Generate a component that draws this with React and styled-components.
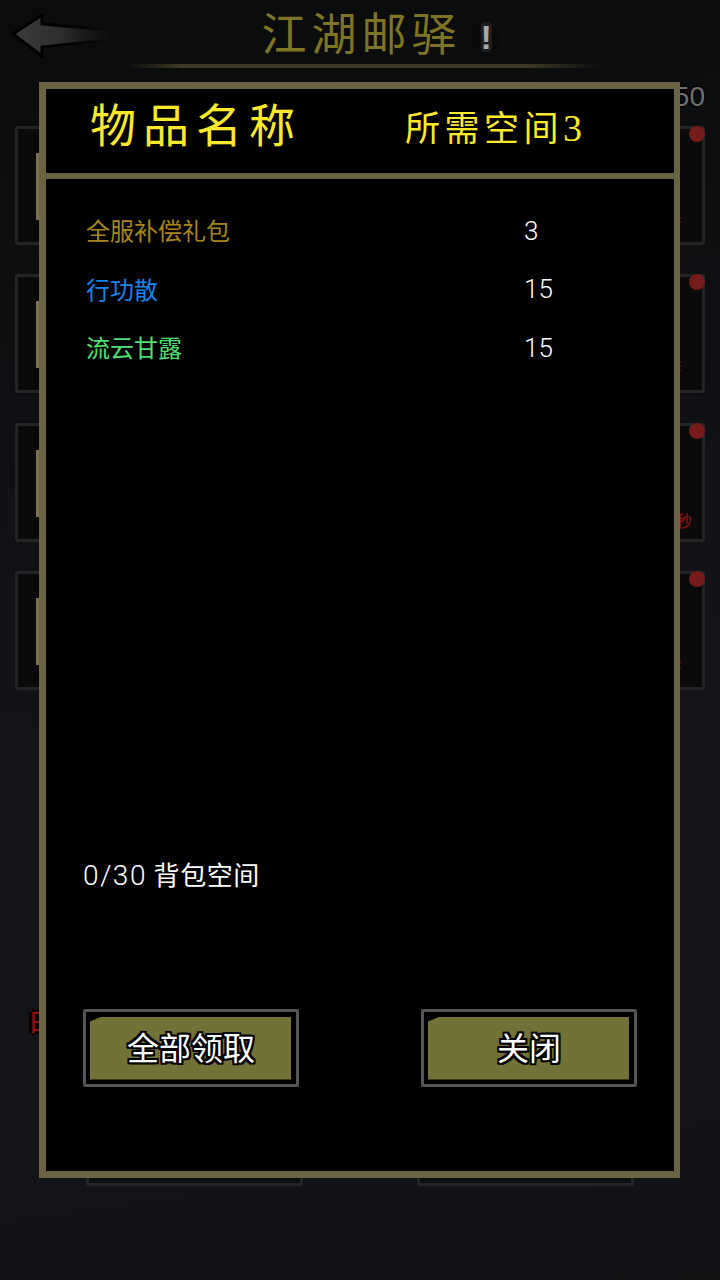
import React from "react";
import styled, { createGlobalStyle } from "styled-components";

const CJK = `"Noto Sans CJK SC", "Noto Sans", sans-serif`;
const TITLE = `"Liberation Serif", "Noto Sans CJK SC", serif`;

const GlobalStyle = createGlobalStyle`
  html, body {
    margin: 0;
    padding: 0;
    background: #111214;
  }
  * {
    box-sizing: border-box;
  }
`;

const mails = [
  { id: 1, tail: "6天" },
  { id: 2, tail: "6天" },
  { id: 3, tail: "秒", urgent: true },
  { id: 4, tail: "6天" },
];

const items = [
  { name: "全服补偿礼包", size: 3, color: "#a6861c" },
  { name: "行功散", size: 15, color: "#1685f0" },
  { name: "流云甘露", size: 15, color: "#4fe070" },
];

function BackArrow() {
  return (
    <svg width="112" height="48" viewBox="0 0 112 48">
      <defs>
        <linearGradient id="arrowFill" x1="0" x2="1" y1="0" y2="0">
          <stop offset="0" stopColor="#3c3c3c" />
          <stop offset="0.45" stopColor="#2e2e2e" />
          <stop offset="1" stopColor="#181818" stopOpacity="0" />
        </linearGradient>
        <linearGradient id="arrowEdge" x1="0" x2="1" y1="0" y2="0">
          <stop offset="0" stopColor="#000" />
          <stop offset="0.5" stopColor="#000" />
          <stop offset="1" stopColor="#000" stopOpacity="0" />
        </linearGradient>
      </defs>
      <path
        d="M3 22 L32 3 V12 L107 19 V27 L32 35 V44 Z"
        fill="url(#arrowFill)"
        stroke="url(#arrowEdge)"
        strokeWidth="3"
        strokeLinejoin="miter"
      />
    </svg>
  );
}

function App() {
  return (
    <Screen>
      <GlobalStyle />
      <Header>
        <BackButton>
          <BackArrow />
        </BackButton>
        <PageTitle>江湖邮驿</PageTitle>
        <Notice>
          <NoticeMark>!</NoticeMark>
        </Notice>
        <HeaderRule />
      </Header>
      <Counter>50</Counter>
      <MailList>
        {mails.map((mail) => (
          <MailCard key={mail.id}>
            <MailHandle />
            <MailTail $urgent={mail.urgent}>{mail.tail}</MailTail>
            <UnreadDot />
          </MailCard>
        ))}
      </MailList>
      <HintText>由</HintText>
      <FooterRow>
        <FooterButton />
        <FooterButton />
      </FooterRow>

      <Modal>
        <ModalHeader>
          <NameHeading>物品名称</NameHeading>
          <SpaceHeading>
            所需空间<SpaceNumber>3</SpaceNumber>
          </SpaceHeading>
        </ModalHeader>
        <ModalBody>
          <ItemList>
            {items.map((item) => (
              <ItemRow key={item.name}>
                <ItemName $color={item.color}>{item.name}</ItemName>
                <ItemSize>{item.size}</ItemSize>
              </ItemRow>
            ))}
          </ItemList>
          <BagSpace>
            <BagCount>0/30</BagCount> 背包空间
          </BagSpace>
          <ButtonRow>
            <ActionButton>
              <ButtonFace>全部领取</ButtonFace>
            </ActionButton>
            <ActionButton>
              <ButtonFace>关闭</ButtonFace>
            </ActionButton>
          </ButtonRow>
        </ModalBody>
      </Modal>
    </Screen>
  );
}

export default App;

const Screen = styled.div`
  position: relative;
  width: 720px;
  height: 1280px;
  overflow: hidden;
  background: linear-gradient(172deg, #0a0b0c 0%, #0e0f11 25%, #131519 65%, #111214 100%);
  font-family: ${CJK};
`;

const Header = styled.div`
  position: relative;
  height: 82px;
  display: flex;
  justify-content: center;
  padding-top: 6px;
`;

const BackButton = styled.div`
  position: absolute;
  left: 10px;
  top: 12px;
  line-height: 0;
`;

const PageTitle = styled.div`
  font-family: ${TITLE};
  font-size: 45px;
  line-height: 60px;
  letter-spacing: 5px;
  color: #7d7524;
  margin-left: 3px;
`;

const Notice = styled.div`
  position: absolute;
  left: 472px;
  top: 22px;
  width: 28px;
  height: 30px;
  border-radius: 14px;
  background: #090a0a;
  display: flex;
  justify-content: center;
`;

const NoticeMark = styled.div`
  width: 11px;
  height: 30px;
  border-radius: 4px;
  background: #1c1d1e;
  color: #a8a8a8;
  font: bold 34px/30px "Liberation Sans", sans-serif;
  text-align: center;
`;

const HeaderRule = styled.div`
  position: absolute;
  left: 125px;
  top: 64px;
  width: 475px;
  height: 4px;
  background: linear-gradient(90deg, transparent, #3d3924 12%, #3d3924 85%, transparent);
`;

const Counter = styled.div`
  height: 44px;
  padding-right: 15px;
  text-align: right;
  color: #6e6e6e;
  font: 28px/30px "Liberation Sans", sans-serif;
  text-shadow: 0 0 3px #000, 0 0 3px #000;
`;

const MailList = styled.div`
  display: flex;
  flex-direction: column;
  gap: 29.3px;
  padding: 0 15px;
`;

const MailCard = styled.div`
  position: relative;
  height: 119px;
  border: 3px solid #232425;
  border-radius: 3px;
  background: #0a0a0a;
`;

const MailHandle = styled.div`
  position: absolute;
  left: 18px;
  top: 24px;
  width: 5px;
  height: 67px;
  background: #7d7152;
`;

const MailTail = styled.div`
  position: absolute;
  right: ${(props) => (props.$urgent ? "10px" : "21px")};
  bottom: ${(props) => (props.$urgent ? "9px" : "14px")};
  font-size: ${(props) => (props.$urgent ? "16px" : "10px")};
  line-height: 20px;
  color: #8d1212;
  -webkit-text-stroke: 0.3px #8d1212;
`;

const UnreadDot = styled.div`
  position: absolute;
  right: -3px;
  top: -3px;
  width: 16px;
  height: 16px;
  border-radius: 50%;
  background: #761a1a;
`;

const HintText = styled.div`
  margin-top: 311px;
  padding-left: 29px;
  height: 107px;
  font-size: 28px;
  line-height: 36px;
  color: #9c0c0c;
  text-shadow: -3px 0 #000, 3px 0 #000, 0 -3px #000, 0 3px #000;
`;

const FooterRow = styled.div`
  display: flex;
  gap: 114px;
  padding-left: 86px;
`;

const FooterButton = styled.div`
  width: 217px;
  height: 78px;
  border: 3px solid #232425;
  border-radius: 3px;
  background: #0d0e10;
`;

const Modal = styled.div`
  position: absolute;
  left: 39px;
  top: 82px;
  width: 641px;
  height: 1096px;
  border-style: solid;
  border-color: #6b6444;
  border-width: 7px 6px 7px 7px;
  background: #000;
  display: flex;
  flex-direction: column;
`;

const ModalHeader = styled.div`
  height: 90px;
  flex: none;
  border-bottom: 6px solid #6b6444;
  display: flex;
  align-items: center;
  padding-left: 44px;
  color: #fde92c;
  font-family: ${TITLE};
`;

const NameHeading = styled.div`
  width: 315px;
  font-size: 46px;
  line-height: 60px;
  letter-spacing: 7px;
  margin-top: -8px;
`;

const SpaceHeading = styled.div`
  display: flex;
  align-items: baseline;
  font-size: 35px;
  line-height: 50px;
  letter-spacing: 4.5px;
  margin-top: -4px;
`;

const SpaceNumber = styled.span`
  font-size: 38px;
  letter-spacing: 0;
`;

const ModalBody = styled.div`
  flex: 1;
  display: flex;
  flex-direction: column;
  padding: 33px 37px 0;
`;

const ItemList = styled.div`
  display: flex;
  flex-direction: column;
  gap: 22.5px;
  height: 644px;
`;

const ItemRow = styled.div`
  display: flex;
  align-items: center;
  height: 36px;
  padding-left: 3px;
`;

const ItemName = styled.div`
  width: 438px;
  font-size: 24px;
  line-height: 36px;
  color: ${(props) => props.$color};
`;

const ItemSize = styled.div`
  font-family: Roboto, "Liberation Sans", sans-serif;
  font-size: 26px;
  font-weight: 300;
  line-height: 36px;
  margin-top: 1px;
  color: #fff;
`;

const BagSpace = styled.div`
  height: 153px;
  font-size: 26px;
  line-height: 36px;
  letter-spacing: 0.6px;
  color: #fff;
`;

const BagCount = styled.span`
  font-family: Roboto, "Liberation Sans", sans-serif;
  font-size: 28px;
  font-weight: 300;
  letter-spacing: 1.6px;
`;

const ButtonRow = styled.div`
  display: flex;
  justify-content: space-between;
`;

const ActionButton = styled.button`
  width: 216px;
  height: 78px;
  padding: 4px;
  border: 3px solid #555;
  border-radius: 2px;
  background: #000;
  font-family: ${CJK};
`;

const ButtonFace = styled.div`
  width: 201px;
  height: 63px;
  display: flex;
  align-items: center;
  justify-content: center;
  padding: 0 1px 4px 2px;
  background: #727238;
  clip-path: polygon(12px 0, 100% 0, 100% 100%, 0 100%, 0 5px);
  font-size: 32px;
  color: #fff;
  text-shadow: -2px 0 #000, 2px 0 #000, 0 -2px #000, 0 2px #000, -2px -2px #000,
    2px -2px #000, -2px 2px #000, 2px 2px #000;
`;
